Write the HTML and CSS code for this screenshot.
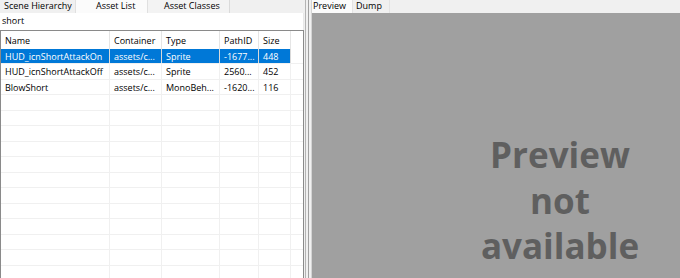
FILE: index.html
```html
<!DOCTYPE html>
<html>
<head>
<meta charset="utf-8">
<link rel="stylesheet" href="styles.css">
</head>
<body>
<div class="app">
  <div class="left">
    <div class="tabs">
      <div class="tab tab-first">Scene Hierarchy</div>
      <div class="tab tab-active">Asset List</div>
      <div class="tab tab-third">Asset Classes</div>
    </div>
    <div class="search">short</div>
    <div class="list">
      <div class="row head">
        <div class="cell">Name</div><div class="cell">Container</div><div class="cell">Type</div><div class="cell">PathID</div><div class="cell">Size</div><div class="cell fill"></div>
      </div>
      <div class="row sel">
        <div class="cell">HUD_icnShortAttackOn</div><div class="cell">assets/c...</div><div class="cell">Sprite</div><div class="cell">-1677...</div><div class="cell">448</div><div class="cell fill"></div>
      </div>
      <div class="row">
        <div class="cell">HUD_icnShortAttackOff</div><div class="cell">assets/c...</div><div class="cell">Sprite</div><div class="cell">2560...</div><div class="cell">452</div><div class="cell fill"></div>
      </div>
      <div class="row">
        <div class="cell">BlowShort</div><div class="cell">assets/c...</div><div class="cell">MonoBeh...</div><div class="cell">-1620...</div><div class="cell">116</div><div class="cell fill"></div>
      </div>
      <div class="row"><div class="cell"></div><div class="cell"></div><div class="cell"></div><div class="cell"></div><div class="cell"></div><div class="cell fill"></div></div>
      <div class="row"><div class="cell"></div><div class="cell"></div><div class="cell"></div><div class="cell"></div><div class="cell"></div><div class="cell fill"></div></div>
      <div class="row"><div class="cell"></div><div class="cell"></div><div class="cell"></div><div class="cell"></div><div class="cell"></div><div class="cell fill"></div></div>
      <div class="row"><div class="cell"></div><div class="cell"></div><div class="cell"></div><div class="cell"></div><div class="cell"></div><div class="cell fill"></div></div>
      <div class="row"><div class="cell"></div><div class="cell"></div><div class="cell"></div><div class="cell"></div><div class="cell"></div><div class="cell fill"></div></div>
      <div class="row"><div class="cell"></div><div class="cell"></div><div class="cell"></div><div class="cell"></div><div class="cell"></div><div class="cell fill"></div></div>
      <div class="row"><div class="cell"></div><div class="cell"></div><div class="cell"></div><div class="cell"></div><div class="cell"></div><div class="cell fill"></div></div>
      <div class="row"><div class="cell"></div><div class="cell"></div><div class="cell"></div><div class="cell"></div><div class="cell"></div><div class="cell fill"></div></div>
      <div class="row"><div class="cell"></div><div class="cell"></div><div class="cell"></div><div class="cell"></div><div class="cell"></div><div class="cell fill"></div></div>
      <div class="row"><div class="cell"></div><div class="cell"></div><div class="cell"></div><div class="cell"></div><div class="cell"></div><div class="cell fill"></div></div>
      <div class="row"><div class="cell"></div><div class="cell"></div><div class="cell"></div><div class="cell"></div><div class="cell"></div><div class="cell fill"></div></div>
      <div class="row"><div class="cell"></div><div class="cell"></div><div class="cell"></div><div class="cell"></div><div class="cell"></div><div class="cell fill"></div></div>
      <div class="row"><div class="cell"></div><div class="cell"></div><div class="cell"></div><div class="cell"></div><div class="cell"></div><div class="cell fill"></div></div>
    </div>
  </div>
  <div class="splitter">
    <div class="sp-a"></div><div class="sp-b"></div><div class="sp-c"></div>
  </div>
  <div class="right">
    <div class="tabs rtabs">
      <div class="tab rtab-active">Preview</div>
      <div class="tab rtab">Dump</div>
    </div>
    <div class="preview">
      <div class="msg">Preview<br>not<br>available</div>
    </div>
  </div>
</div>
</body>
</html>
```

FILE: styles.css
```css
html, body {
  margin: 0;
  padding: 0;
}
body {
  width: 680px;
  height: 278px;
  overflow: hidden;
  background: #f0f0f0;
  font-family: "Open Sans", "Noto Sans", sans-serif;
  font-size: 9px;
  color: #000;
}
.app {
  display: flex;
  width: 680px;
  height: 278px;
}
.left {
  width: 304px;
  flex: none;
  display: flex;
  flex-direction: column;
  overflow: hidden;
}
.tabs {
  height: 13px;
  display: flex;
  overflow: hidden;
  flex: none;
}
.tab {
  line-height: 13px;
  height: 14px;
  margin-top: -1px;
  white-space: nowrap;
  box-sizing: border-box;
}
.tab-first {
  width: 75px;
  padding-left: 4px;
  background: #f0f0f0;
}
.tab-active {
  width: 73px;
  padding-left: 20px;
  background: #fbfbfb;
  border-left: 1px solid #e0e0e0;
  border-right: 1px solid #e0e0e0;
}
.tab-third {
  width: 82px;
  padding-left: 16px;
  background: #f3f3f3;
  border-right: 1px solid #dadada;
}
.search {
  height: 17px;
  line-height: 16px;
  padding-left: 2px;
  background: #fff;
  flex: none;
  box-sizing: border-box;
  border-right: 1px solid #e8e8e8;
}
.list {
  flex: 1;
  background: #fff;
  border-top: 1px solid #8a8a8a;
  border-left: 1px solid #8a8a8a;
  border-right: 1px solid #8a8a8a;
  overflow: hidden;
}
.row {
  display: grid;
  grid-template-columns: 109px 52px 58px 39px 32px 1fr;
  height: 15.5px;
  line-height: 15px;
  border-bottom: 1px solid #f0f0f0;
  box-sizing: border-box;
}
.row.head {
  height: 17.5px;
  line-height: 20px;
  border-bottom: none;
}
.cell {
  padding-left: 4px;
  border-right: 1px solid #f0f0f0;
  white-space: nowrap;
  overflow: hidden;
}
.head .cell {
  border-right-color: #e5e5e5;
}
.cell.fill {
  border-right: none;
}
.row.sel .cell {
  background: #0078d7;
  color: #fff;
  border-right-color: #d9d9d9;
}
.row.sel .cell.fill {
  background: #fff;
}
.splitter {
  width: 8px;
  flex: none;
  display: flex;
  background: #f0f0f0;
}
.sp-a {
  width: 1px;
  margin-left: 1px;
  background: #b4b4b4;
}
.sp-b {
  width: 1px;
  margin-left: 2px;
  background: #a0a0a0;
}
.sp-c {
  width: 1px;
  margin-left: 2px;
  background: #d4d4d4;
}
.right {
  flex: 1;
  display: flex;
  flex-direction: column;
  overflow: hidden;
}
.rtab-active {
  width: 41px;
  padding-left: 1px;
  background: #fbfbfb;
  border-right: 1px solid #e3e3e3;
}
.rtab {
  width: 37px;
  padding-left: 3px;
  background: #f0f0f0;
  border-right: 1px solid #e3e3e3;
}
.preview {
  flex: 1;
  background: #a0a0a0;
  overflow: hidden;
}
.msg {
  width: 496px;
  padding-top: 119px;
  text-align: center;
  font-family: "Open Sans", "Noto Sans", sans-serif;
  font-weight: 700;
  font-size: 35px;
  line-height: 45.5px;
  color: #5f5f5f;
}
```
